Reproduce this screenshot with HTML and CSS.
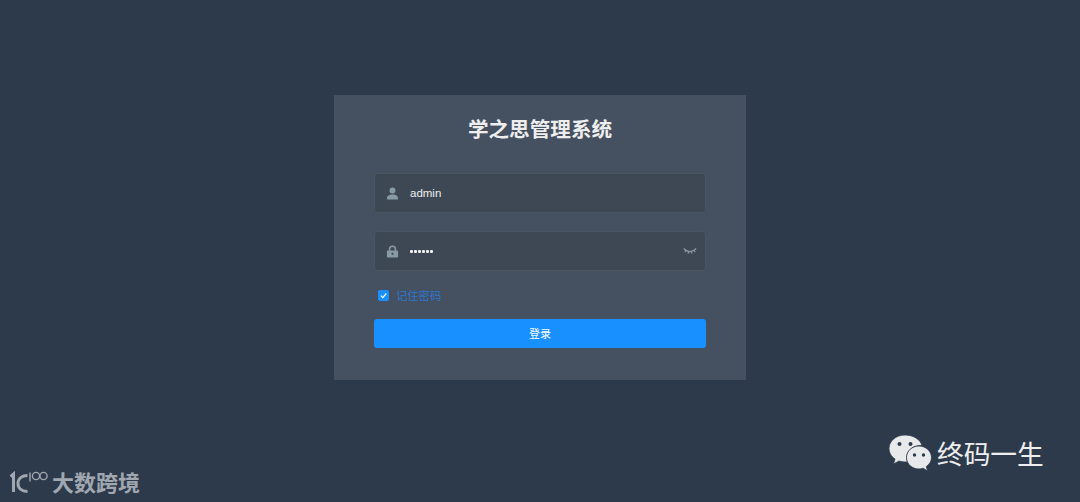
FILE: index.html
```html
<!DOCTYPE html>
<html lang="zh">
<head>
<meta charset="utf-8">
<title>学之思管理系统</title>
<link rel="stylesheet" href="styles.css">
</head>
<body>
<main class="page">
  <form class="card">
    <h1 class="title">学之思管理系统</h1>
    <div class="field">
      <svg class="icon" viewBox="0 0 14 14"><circle cx="7" cy="3.8" r="3.2"/><path d="M1 12.6c0-3.6 2.400-4.600 6-4.600s6 1 6 4.600c0 .5-.3.8-.8.8H1.800c-.5 0-.8-.3-.8-.8z"/></svg>
      <span class="value">admin</span>
    </div>
    <div class="field">
      <svg class="icon" viewBox="0 0 14 14"><path d="M3 6.200V4.500a4 4 0 0 1 8 0v1.700h-1.700V4.500a2.300 2.300 0 0 0-4.600 0v1.700z"/><path fill-rule="evenodd" d="M2.200 5.800h9.600c.7 0 1.200.5 1.200 1.200v5.300c0 .7-.5 1.200-1.200 1.200H2.200c-.7 0-1.200-.5-1.200-1.200V7c0-.7.500-1.200 1.200-1.200zM7 8.300a1.200 1.200 0 1 0 0 2.400 1.200 1.200 0 0 0 0-2.400z"/></svg>
      <span class="dots"><i></i><i></i><i></i><i></i><i></i><i></i></span>
      <svg class="eye" viewBox="0 0 14 8"><path d="M.8 1.500C2.800 3.800 4.800 4.600 7 4.600s4.200-.8 6.200-3.100M3 3.500 1.800 5.200M5.600 4.500 5.100 6.600M8.400 4.500l.5 2.100M11 3.500l1.200 1.700"/></svg>
    </div>
    <label class="remember">
      <span class="check"><svg viewBox="0 0 11 11"><path d="M2.800 5.600 4.800 7.600 8.300 3.500"/></svg></span>
      <span>记住密码</span>
    </label>
    <button class="submit" type="button">登录</button>
  </form>
</main>
<div class="mark-left">
  <svg class="mark-logo" viewBox="0 0 38 26"><path class="thick" d="M0.500 8.500 3.500 6V24"/><path class="thick" d="M17.500 7.500C12 7.500 8 10.500 8 15.500s4 8 9.500 8"/><path class="thin" d="M20 4.500v9"/><circle class="thin" cx="26" cy="8" r="3.600"/><circle class="thin" cx="33.500" cy="8" r="3.600"/></svg>
  <span>大数跨境</span>
</div>
<div class="mark-right">
  <svg class="wechat" viewBox="0 0 44 38">
    <path class="bubble" d="M17 1C8 1 1 7 1 14.500c0 4.300 2.300 8 6 10.500l-1.500 5 5.500-3c2 .6 4 1 6 1 1 0 1.500 0 2.500-.2C19 26 18.800 25 18.800 23.500 18.800 16 25.500 11.500 33 11.500h1C32.300 5.300 25.300 1 17 1z"/>
    <path class="bubble" d="M43.500 23.500c0-6.500-6-11.500-12.500-11.500-7 0-12.500 5-12.500 11.500S24 35 31 35c1.500 0 3-.3 4.200-.8l4.300 2.800-1.200-4.400c3-2.100 5.200-5.300 5.200-9.100z"/>
    <circle class="eye-dot" cx="11.500" cy="10" r="2"/><circle class="eye-dot" cx="22.500" cy="10" r="2"/><circle class="eye-dot" cx="26.500" cy="21" r="1.700"/><circle class="eye-dot" cx="35.500" cy="21" r="1.700"/>
  </svg>
  <span>终码一生</span>
</div>
</body>
</html>
```
FILE: styles.css
```css
* { box-sizing: border-box; }
html, body { margin: 0; height: 100%; }
body {
  background: #2d3a4b;
  font-family: "Liberation Sans", "Noto Sans CJK SC", sans-serif;
  overflow: hidden;
  position: relative;
}
.page { display: flex; justify-content: center; padding-top: 95px; }
.card {
  width: 412px;
  height: 285px;
  padding: 22px 40px 0;
  background: #455060;
  display: flex;
  flex-direction: column;
}
.title {
  margin: 0 0 28px;
  height: 28px;
  line-height: 26px;
  font-size: 20.600px;
  font-weight: 700;
  text-align: center;
  color: #eeeeee;
}
.field {
  height: 40px;
  margin-bottom: 18px;
  padding: 0 12px;
  background: #3d4854;
  border: 1px solid #4a5562;
  border-radius: 4px;
  display: flex;
  align-items: center;
}
.icon { width: 13px; height: 13px; fill: #889aa4; flex: none; margin-left: -1px; }
.value { margin-left: 11px; font-size: 11.500px; color: #eeeeee; }
.dots { margin-left: 11px; display: flex; gap: 1px; flex: 1; }
.dots i { width: 3px; height: 3px; border-radius: 1px; background: #f0f0f0; }
.eye { width: 14px; height: 8px; fill: none; stroke: #8a96a0; stroke-width: 1.200; margin-right: -4px; }
.remember {
  display: flex;
  align-items: center;
  gap: 7px;
  margin: -1px 0 0 4px;
  height: 14px;
  font-size: 11.300px;
  color: #2a78d0;
}
.check { width: 11px; height: 11px; background: #1890ff; border-radius: 2px; display: flex; }
.check svg { width: 11px; height: 11px; fill: none; stroke: #fff; stroke-width: 1.200; }
.submit {
  margin-top: 17px;
  height: 29px;
  border: 0;
  padding: 0 0 2px;
  background: #1890ff;
  border-radius: 3px;
  color: #fff;
  font: 11px "Liberation Sans", "Noto Sans CJK SC", sans-serif;
}
.mark-left {
  position: absolute;
  left: 10px;
  top: 466px;
  display: flex;
  align-items: center;
  gap: 4px;
  color: #a0a7b0;
  font: 700 22px/30px "Noto Sans CJK SC", sans-serif;
}
.mark-logo { width: 38px; height: 26px; fill: none; stroke: #a0a7b0; margin-top: 0; }
.thick { stroke-width: 3; }
.thin { stroke-width: 1.400; }
.mark-right {
  position: absolute;
  left: 888px;
  top: 433px;
  display: flex;
  align-items: center;
  gap: 5px;
  color: #eeeeee;
  font: 400 26.700px/38px "Noto Sans CJK SC", sans-serif;
}
.wechat { width: 44px; height: 38px; margin-top: 1px; }
.bubble { fill: #e8e9ea; stroke: #2d3a4b; stroke-width: .8; }
.eye-dot { fill: #2d3a4b; }
```
